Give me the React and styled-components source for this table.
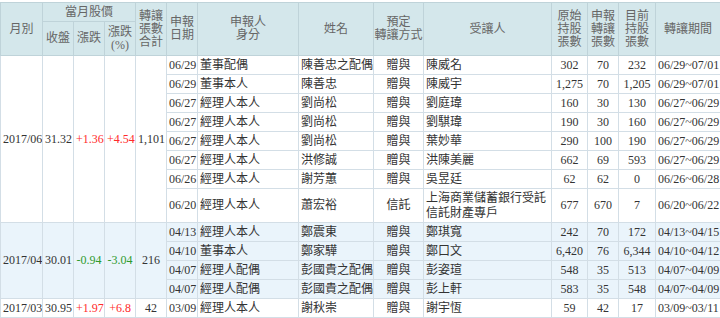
import React from 'react';
import styled, { createGlobalStyle } from 'styled-components';

const GlobalStyle = createGlobalStyle`
    html, body {
        margin: 0;
        padding: 0;
        background: #fff;
    }
`;

const Frame = styled.div`
    padding-top: 2px;
    width: 720px;
`;

const Table = styled.table`
    width: 720px;
    table-layout: fixed;
    border-collapse: collapse;
    font-family: "Liberation Serif", "Noto Sans CJK TC", serif;
    font-size: 12px;
    color: #333;
`;

const Th = styled.th`
    background: #d4e7eb;
    border: 1px solid #bfd3d9;
    color: #666;
    font-weight: normal;
    line-height: 13px;
    padding: 0;
    text-align: center;
    vertical-align: middle;
    height: ${p => p.$h || 'auto'};
`;

const Tr = styled.tr`
    background: ${p => (p.$shade ? '#eaf4fb' : '#fff')};
    height: ${p => (p.$tall ? '34px' : '19px')};
`;

const Td = styled.td`
    border: 1px solid #d3dee6;
    padding: 0 2px;
    line-height: 15px;
    text-align: ${p => p.$align || 'center'};
    vertical-align: middle;
    white-space: ${p => (p.$wrap ? 'normal' : 'nowrap')};
    overflow: hidden;
    color: ${p => (p.$tone === 'up' ? '#ff2a2a' : p.$tone === 'down' ? '#2e9a2e' : '#333')};
`;

const cols = [42, 31, 31, 31, 31, 31, 101, 75, 50, 128, 36, 31, 37, 65];

const groups = [
    {
        month: '2017/06', close: '31.32', chg: '+1.36', pct: '+4.54', total: '1,101', tone: 'up', shade: false,
        rows: [
            ['06/29', '董事配偶', '陳善忠之配偶', '贈與', '陳威名', '302', '70', '232', '06/29~07/01'],
            ['06/29', '董事本人', '陳善忠', '贈與', '陳威宇', '1,275', '70', '1,205', '06/29~07/01'],
            ['06/27', '經理人本人', '劉尚松', '贈與', '劉庭瑋', '160', '30', '130', '06/27~06/29'],
            ['06/27', '經理人本人', '劉尚松', '贈與', '劉騏瑋', '190', '30', '160', '06/27~06/29'],
            ['06/27', '經理人本人', '劉尚松', '贈與', '葉妙華', '290', '100', '190', '06/27~06/29'],
            ['06/27', '經理人本人', '洪修誠', '贈與', '洪陳美麗', '662', '69', '593', '06/27~06/29'],
            ['06/26', '經理人本人', '謝芳蕙', '贈與', '吳昱廷', '62', '62', '0', '06/26~06/28'],
            ['06/20', '經理人本人', '蕭宏裕', '信託', '上海商業儲蓄銀行受託信託財產專戶', '677', '670', '7', '06/20~06/22'],
        ],
    },
    {
        month: '2017/04', close: '30.01', chg: '-0.94', pct: '-3.04', total: '216', tone: 'down', shade: true,
        rows: [
            ['04/13', '經理人本人', '鄭震東', '贈與', '鄭琪寬', '242', '70', '172', '04/13~04/15'],
            ['04/10', '董事本人', '鄭家驊', '贈與', '鄭口文', '6,420', '76', '6,344', '04/10~04/12'],
            ['04/07', '經理人配偶', '彭國貴之配偶', '贈與', '彭姿瑄', '548', '35', '513', '04/07~04/09'],
            ['04/07', '經理人配偶', '彭國貴之配偶', '贈與', '彭上軒', '583', '35', '548', '04/07~04/09'],
        ],
    },
    {
        month: '2017/03', close: '30.95', chg: '+1.97', pct: '+6.8', total: '42', tone: 'up', shade: false,
        rows: [
            ['03/09', '經理人本人', '謝秋崇', '贈與', '謝宇恆', '59', '42', '17', '03/09~03/11'],
        ],
    },
];

function Lines({ text }) {
    const parts = text.split('\n');
    return parts.map((t, i) => (
        <React.Fragment key={i}>
            {t}
            {i < parts.length - 1 && <br />}
        </React.Fragment>
    ));
}

function Group({ g }) {
    return g.rows.map((r, i) => (
        <Tr key={i} $shade={g.shade} $tall={r[4].length > 10}>
            {i === 0 && (
                <>
                    <Td rowSpan={g.rows.length}>{g.month}</Td>
                    <Td rowSpan={g.rows.length}>{g.close}</Td>
                    <Td rowSpan={g.rows.length} $tone={g.tone}>{g.chg}</Td>
                    <Td rowSpan={g.rows.length} $tone={g.tone}>{g.pct}</Td>
                    <Td rowSpan={g.rows.length}>{g.total}</Td>
                </>
            )}
            <Td $align="left">{r[0]}</Td>
            <Td $align="left">{r[1]}</Td>
            <Td $align="left">{r[2]}</Td>
            <Td>{r[3]}</Td>
            <Td $align="left" $wrap>{r[4]}</Td>
            <Td>{r[5]}</Td>
            <Td>{r[6]}</Td>
            <Td>{r[7]}</Td>
            <Td $align="left">{r[8]}</Td>
        </Tr>
    ));
}

function App() {
    return (
        <Frame>
            <GlobalStyle />
            <Table>
                <colgroup>
                    {cols.map((w, i) => <col key={i} style={{ width: w }} />)}
                </colgroup>
                <thead>
                    <tr>
                        <Th rowSpan={2}>月別</Th>
                        <Th colSpan={3} $h="18px">當月股價</Th>
                        <Th rowSpan={2}><Lines text={'轉讓\n張數\n合計'} /></Th>
                        <Th rowSpan={2}><Lines text={'申報\n日期'} /></Th>
                        <Th rowSpan={2}><Lines text={'申報人\n身分'} /></Th>
                        <Th rowSpan={2}>姓名</Th>
                        <Th rowSpan={2}><Lines text={'預定\n轉讓方式'} /></Th>
                        <Th rowSpan={2}>受讓人</Th>
                        <Th rowSpan={2}><Lines text={'原始\n持股\n張數'} /></Th>
                        <Th rowSpan={2}><Lines text={'申報\n轉讓\n張數'} /></Th>
                        <Th rowSpan={2}><Lines text={'目前\n持股\n張數'} /></Th>
                        <Th rowSpan={2}>轉讓期間</Th>
                    </tr>
                    <tr>
                        <Th $h="33px">收盤</Th>
                        <Th>漲跌</Th>
                        <Th><Lines text={'漲跌\n(%)'} /></Th>
                    </tr>
                </thead>
                <tbody>
                    {groups.map((g, i) => <Group key={i} g={g} />)}
                </tbody>
            </Table>
        </Frame>
    );
}

export default App;
